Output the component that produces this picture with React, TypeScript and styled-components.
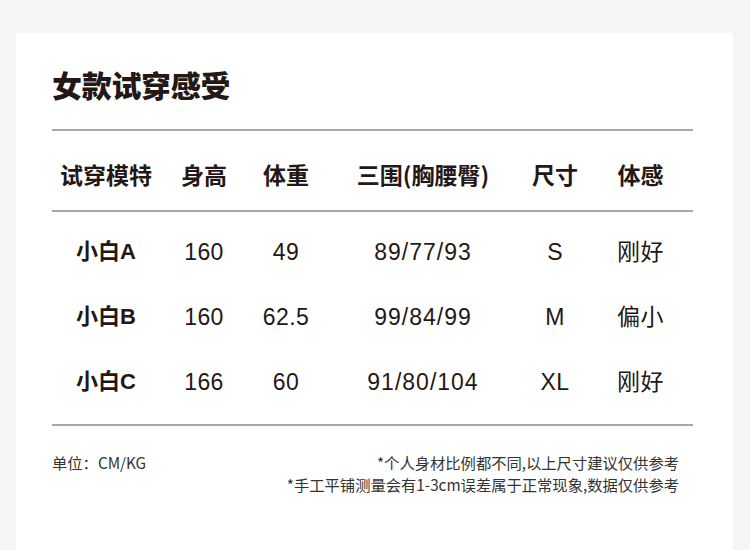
import React from "react";
import styled, { createGlobalStyle } from "styled-components";

const GlobalStyle = createGlobalStyle`
  html, body {
    margin: 0;
    padding: 0;
    background: #f5f5f5;
  }
  body {
    font-family: "Liberation Sans", "Noto Sans CJK SC", sans-serif;
    color: #231815;
    overflow: hidden;
  }
`;

type Row = {
  name: string;
  height: string;
  weight: string;
  sizes: string;
  size: string;
  feel: string;
};

const rows: Row[] = [
  { name: "小白A", height: "160", weight: "49", sizes: "89/77/93", size: "S", feel: "刚好" },
  { name: "小白B", height: "160", weight: "62.5", sizes: "99/84/99", size: "M", feel: "偏小" },
  { name: "小白C", height: "166", weight: "60", sizes: "91/80/104", size: "XL", feel: "刚好" },
];

const headers = ["试穿模特", "身高", "体重", "三围(胸腰臀)", "尺寸", "体感"];

const App: React.FC = () => {
  return (
    <>
      <GlobalStyle />
      <Page>
        <Card>
          <Title>女款试穿感受</Title>
          <Table>
            <HeadRow>
              {headers.map((h) => (
                <HeadCell key={h}>{h}</HeadCell>
              ))}
            </HeadRow>
            <Body>
              {rows.map((r) => (
                <DataRow key={r.name}>
                  <NameCell>{r.name}</NameCell>
                  <Cell>{r.height}</Cell>
                  <Cell>{r.weight}</Cell>
                  <Cell $wide>{r.sizes}</Cell>
                  <Cell>{r.size}</Cell>
                  <Cell>{r.feel}</Cell>
                </DataRow>
              ))}
            </Body>
          </Table>
          <Footer>
            <Note>单位：CM/KG</Note>
            <Notes>
              <Note>*个人身材比例都不同,以上尺寸建议仅供参考</Note>
              <Note>*手工平铺测量会有1-3cm误差属于正常现象,数据仅供参考</Note>
            </Notes>
          </Footer>
        </Card>
      </Page>
    </>
  );
};

const Page = styled.div`
  width: 750px;
  height: 550px;
  padding: 33px 17px 0 16px;
  box-sizing: border-box;
  overflow: hidden;
`;

const Card = styled.div`
  background: #ffffff;
  height: 100%;
  box-sizing: border-box;
  padding: 36px 40px 0 36px;
`;

const Title = styled.h1`
  margin: 0 0 30px;
  font-family: "Noto Sans CJK SC", sans-serif;
  font-size: 30px;
  line-height: 30px;
  font-weight: 900;
  letter-spacing: -0.3px;
`;

const Table = styled.div`
  border-top: 2px solid #a8a8a8;
  border-bottom: 2px solid #a8a8a8;
`;

const Columns = styled.div`
  display: grid;
  grid-template-columns: 108px 88px 76px 198px 66px 105px;
  align-items: center;
  justify-items: center;
`;

const HeadRow = styled(Columns)`
  padding: 31px 0 24px;
  border-bottom: 2px solid #a8a8a8;
`;

const HeadCell = styled.div`
  font-family: "Noto Sans CJK SC", sans-serif;
  font-size: 23px;
  line-height: 24px;
  font-weight: 700;
  white-space: nowrap;
`;

const Body = styled.div`
  padding: 7px 0 10px;
`;

const DataRow = styled(Columns)`
  height: 65px;
`;

const Cell = styled.div<{ $wide?: boolean }>`
  font-size: 23px;
  line-height: 24px;
  white-space: nowrap;
  letter-spacing: ${(p) => (p.$wide ? "1px" : "0.4px")};
`;

const NameCell = styled(Cell)`
  font-size: 22px;
  font-weight: 700;
  letter-spacing: 0;
`;

const Footer = styled.div`
  display: flex;
  justify-content: space-between;
  align-items: flex-start;
  padding: 25px 14px 0 0;
`;

const Notes = styled.div`
  display: flex;
  flex-direction: column;
  align-items: flex-end;
`;

const Note = styled.div`
  font-family: "Noto Sans CJK SC", sans-serif;
  font-size: 15.3px;
  line-height: 22px;
  color: #333333;
  white-space: nowrap;
`;

export default App;
